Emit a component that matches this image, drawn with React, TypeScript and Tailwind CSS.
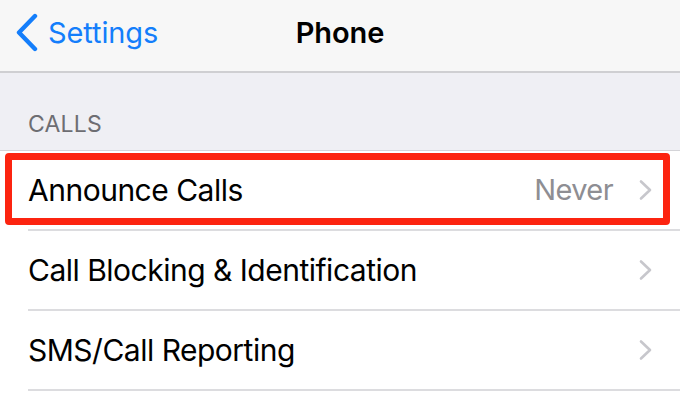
import React from "react";

const Chevron = () => (
  <svg width="16" height="22" viewBox="0 0 16 22" className="shrink-0">
    <path d="M3 2.5 L12 11 L3 19.5" fill="none" stroke="#c7c7cc" strokeWidth="2.6" strokeLinecap="round" strokeLinejoin="round" />
  </svg>
);

const Row = ({ label, value }: { label: string; value?: string }) => (
  <div className="pl-[28px]">
    <div className="h-[80px] flex items-center pr-[26px] border-b-2 border-[#dcdcdf]">
      <span className="flex-1 text-[30px] text-black tracking-[-0.5px]">{label}</span>
      {value && <span className="text-[29px] text-[#8e8e93] mr-[25px] tracking-[-0.6px]">{value}</span>}
      <Chevron />
    </div>
  </div>
);

export default function App() {
  return (
    <div className="w-[680px] h-[401px] overflow-hidden bg-white relative" style={{ fontFamily: "Inter, 'Noto Sans', sans-serif" }}>
      <div className="h-[73px] bg-[#f7f7f7] border-b-2 border-[#cfcfd2] grid grid-cols-[1fr_auto_1fr] items-center pb-[6px]">
        <div className="flex items-center pl-[15px] text-[#147efb]">
          <svg width="24" height="40" viewBox="0 0 24 40" className="shrink-0">
            <path d="M20 3 L4 19.5 L20 36" fill="none" stroke="#147efb" strokeWidth="4.4" strokeLinecap="round" strokeLinejoin="round" />
          </svg>
          <span className="ml-[9px] text-[29px] tracking-[-0.1px]">Settings</span>
        </div>
        <div className="text-[29px] font-semibold text-black tracking-[-0.1px]">Phone</div>
        <div />
      </div>
      <div className="h-[78px] bg-[#efeff4] border-b border-[#d4d4d8] flex items-end pl-[28px] pb-[9px]">
        <span className="text-[23px] text-[#6d6d72] tracking-[0.2px]">CALLS</span>
      </div>
      <div>
        <Row label="Announce Calls" value="Never" />
        <Row label="Call Blocking & Identification" />
        <Row label="SMS/Call Reporting" />
      </div>
      <div className="absolute left-[5px] top-[153px] w-[665px] h-[72px] border-[7px] border-[#fc2410] rounded-[4px]" />
    </div>
  );
}
